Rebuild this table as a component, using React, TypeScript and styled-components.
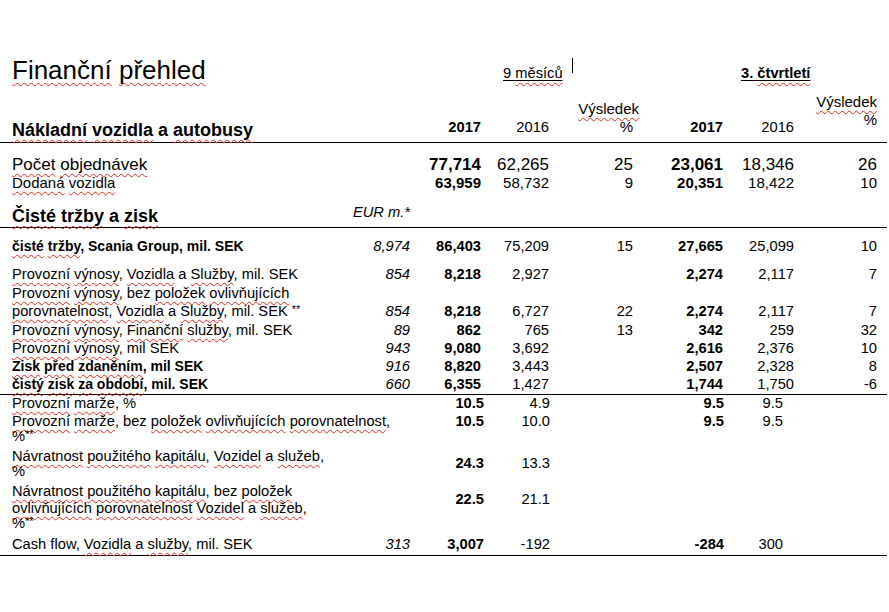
import React from 'react';
import styled, { createGlobalStyle, css } from 'styled-components';

const Global = createGlobalStyle`
  html, body { margin: 0; padding: 0; background: #ffffff; }
  body {
    font-family: "Liberation Sans", Arial, sans-serif;
    color: #000000;
    -webkit-font-smoothing: antialiased;
  }
`;

type Cols = 'upper' | 'lower';
const TEMPLATES: Record<Cols, string> = {
  upper: '338px 60px 71px 68px 84px 90px 71px 83px',
  lower: '338px 60px 74px 66px 84px 90px 59px 94px',
};

const Page = styled.div`
  width: 889px;
  height: 612px;
  padding-top: 55px;
  box-sizing: border-box;
  overflow: hidden;
`;

const Table = styled.div`
  width: 887px;
`;

const Section = styled.section<{ $pt?: number; $pb?: number }>`
  border-bottom: 1px solid #000;
  padding: ${({ $pt = 0 }) => $pt}px 0 ${({ $pb = 0 }) => $pb}px;
`;

const Row = styled.div<{
  $cols?: Cols;
  $pt?: number;
  $lh?: number;
  $size?: number;
  $h?: number;
  $align?: 'start' | 'end';
}>`
  display: grid;
  grid-template-columns: ${({ $cols = 'upper' }) => TEMPLATES[$cols]};
  padding: ${({ $pt = 0 }) => $pt}px 10px 0 12px;
  line-height: ${({ $lh = 18 }) => $lh}px;
  font-size: ${({ $size = 14.7 }) => $size}px;
  align-items: ${({ $align = 'start' }) => $align};
  ${({ $h }) => $h !== undefined && css`height: ${$h}px;`}
`;

const Spell = styled.span`
  text-decoration: underline wavy #e3261c;
  text-decoration-thickness: 1px;
  text-underline-offset: 3px;
  text-decoration-skip-ink: none;
`;

const Title = styled.h1`
  grid-column: 1 / span 2;
  grid-row: 1;
  margin: 0;
  font-size: 26px;
  font-weight: 400;
  line-height: 30px;
  white-space: nowrap;
`;

const GroupLabel = styled.div<{ $start: number; $indent: number; $bold?: boolean }>`
  grid-column: ${({ $start }) => $start} / span 2;
  grid-row: 1;
  display: flex;
  align-items: flex-start;
  margin-top: 9px;
  padding-left: ${({ $indent }) => $indent}px;
  line-height: 18px;
  font-size: 14.7px;
  font-weight: ${({ $bold }) => ($bold ? 700 : 400)};
  white-space: nowrap;
`;

const Underlined = styled.span`
  text-decoration: underline solid #000;
  text-decoration-thickness: 1px;
  text-underline-offset: 2px;
  text-decoration-skip-ink: none;
  & > ${Spell} {
    text-underline-offset: 4px;
  }
`;

const Caret = styled.span`
  display: block;
  width: 1px;
  height: 15px;
  margin-left: 9px;
  margin-top: -6px;
  background: #000;
`;

const HeadLabel = styled.div`
  grid-column: 1 / span 2;
  grid-row: 1;
  font-size: 18px;
  font-weight: 700;
  line-height: 22px;
  padding-bottom: 1px;
  white-space: nowrap;
`;

const YearHead = styled.div<{ $col: number; $bold?: boolean }>`
  grid-column: ${({ $col }) => $col};
  grid-row: 1;
  text-align: right;
  font-weight: ${({ $bold }) => ($bold ? 700 : 400)};
  padding-bottom: 6px;
`;

const ResultHead = styled.div<{ $col: number; $pb: number; $overhang?: number }>`
  grid-column: ${({ $col }) => $col};
  grid-row: 1;
  text-align: right;
  font-size: 15px;
  padding-bottom: ${({ $pb }) => $pb}px;
  white-space: nowrap;
  & > span:first-child {
    display: block;
    margin-right: ${({ $overhang = 0 }) => -$overhang}px;
  }
`;

const Label = styled.div<{ $bold?: boolean; $size?: number }>`
  grid-column: 1 / span 2;
  grid-row: 1;
  white-space: nowrap;
  font-weight: ${({ $bold }) => ($bold ? 700 : 400)};
  ${({ $size }) => $size !== undefined && css`font-size: ${$size}px;`}
`;

const LabelLine = styled.div<{ $lh?: number }>`
  ${({ $lh }) => $lh !== undefined && css`line-height: ${$lh}px;`}
`;

const Stars = styled.span`
  font-size: 11px;
  line-height: 0;
  vertical-align: 3px;
`;

const Heading = styled.div`
  grid-column: 1;
  grid-row: 1;
  font-size: 18px;
  font-weight: 700;
  line-height: 22px;
  white-space: nowrap;
`;

const Unit = styled.div`
  grid-column: 2;
  grid-row: 1;
  text-align: right;
  font-style: italic;
  line-height: 14px;
  white-space: nowrap;
`;

const Num = styled.div<{ $col: number; $bold?: boolean; $italic?: boolean; $pt?: number }>`
  grid-column: ${({ $col }) => $col};
  grid-row: 1;
  text-align: right;
  white-space: nowrap;
  font-weight: ${({ $bold }) => ($bold ? 700 : 400)};
  font-style: ${({ $italic }) => ($italic ? 'italic' : 'normal')};
  padding-top: ${({ $pt = 0 }) => $pt}px;
`;

type Vals = [string, string, string, string, string, string, string];

const Values: React.FC<{ v: Vals; pt?: number }> = ({ v, pt }) => (
  <>
    {v.map((text, i) =>
      text ? (
        <Num
          key={i}
          $col={i + 2}
          $bold={i === 1 || i === 4}
          $italic={i === 0}
          $pt={pt}
        >
          {text}
        </Num>
      ) : null
    )}
  </>
);

export default function App() {
  return (
    <>
      <Global />
      <Page>
        <Table>
          <Section>
            <Row $h={30} $lh={30}>
              <Title>
                <Spell>Finanční</Spell> <Spell>přehled</Spell>
              </Title>
              <GroupLabel $start={4} $indent={22}>
                <Underlined>
                  9 <Spell>měsíců</Spell>
                </Underlined>
                <Caret />
              </GroupLabel>
              <GroupLabel $start={7} $indent={18} $bold>
                <Underlined>
                  3. <Spell>čtvrtletí</Spell>
                </Underlined>
              </GroupLabel>
            </Row>
            <Row $h={57} $align="end">
              <HeadLabel>
                <Spell>Nákladní</Spell> <Spell>vozidla</Spell> a <Spell>autobusy</Spell>
              </HeadLabel>
              <YearHead $col={3} $bold>2017</YearHead>
              <YearHead $col={4}>2016</YearHead>
              <ResultHead $col={5} $pb={6} $overhang={6}>
                <span>
                  <Spell>Výsledek</Spell>
                </span>
                <span>%</span>
              </ResultHead>
              <YearHead $col={6} $bold>2017</YearHead>
              <YearHead $col={7}>2016</YearHead>
              <ResultHead $col={8} $pb={13}>
                <span>
                  <Spell>Výsledek</Spell>
                </span>
                <span>%</span>
              </ResultHead>
            </Row>
          </Section>

          <Section $pt={12}>
            <Row $lh={20} $size={17}>
              <Label>
                <Spell>Počet</Spell> <Spell>objednávek</Spell>
              </Label>
              <Values v={['', '77,714', '62,265', '25', '23,061', '18,346', '26']} />
            </Row>
            <Row $lh={16} $size={15}>
              <Label>
                <Spell>Dodaná</Spell> <Spell>vozidla</Spell>
              </Label>
              <Values v={['', '63,959', '58,732', '9', '20,351', '18,422', '10']} />
            </Row>
            <Row $pt={14} $lh={22}>
              <Heading>
                <Spell>Čisté</Spell> <Spell>tržby</Spell> a <Spell>zisk</Spell>
              </Heading>
              <Unit>EUR m.*</Unit>
            </Row>
          </Section>

          <Section $pt={9} $pb={1}>
            <Row>
              <Label $bold $size={14}>
                <Spell>čisté</Spell> <Spell>tržby</Spell>, Scania Group, mil. SEK
              </Label>
              <Values v={['8,974', '86,403', '75,209', '15', '27,665', '25,099', '10']} />
            </Row>
            <Row $pt={10}>
              <Label>
                <Spell>Provozní</Spell> <Spell>výnosy</Spell>, <Spell>Vozidla</Spell> a{' '}
                <Spell>Služby</Spell>, mil. SEK
              </Label>
              <Values v={['854', '8,218', '2,927', '', '2,274', '2,117', '7']} />
            </Row>
            <Row $pt={1}>
              <Label>
                <LabelLine>
                  <Spell>Provozní</Spell> <Spell>výnosy</Spell>, bez <Spell>položek</Spell>{' '}
                  <Spell>ovlivňujících</Spell>
                </LabelLine>
                <LabelLine>
                  <Spell>porovnatelnost</Spell>, <Spell>Vozidla</Spell> a <Spell>Služby</Spell>,
                  mil. SEK <Stars>**</Stars>
                </LabelLine>
              </Label>
              <Values v={['854', '8,218', '6,727', '22', '2,274', '2,117', '7']} pt={18} />
            </Row>
            <Row $pt={1}>
              <Label>
                <Spell>Provozní</Spell> <Spell>výnosy</Spell>, <Spell>Finanční</Spell>{' '}
                <Spell>služby</Spell>, mil. SEK
              </Label>
              <Values v={['89', '862', '765', '13', '342', '259', '32']} />
            </Row>
            <Row>
              <Label>
                <Spell>Provozní</Spell> <Spell>výnosy</Spell>, mil SEK
              </Label>
              <Values v={['943', '9,080', '3,692', '', '2,616', '2,376', '10']} />
            </Row>
            <Row>
              <Label $bold $size={14}>
                <Spell>Zisk</Spell> <Spell>před</Spell> <Spell>zdaněním</Spell>, mil SEK
              </Label>
              <Values v={['916', '8,820', '3,443', '', '2,507', '2,328', '8']} />
            </Row>
            <Row>
              <Label $bold $size={14}>
                <Spell>čistý</Spell> <Spell>zisk</Spell> <Spell>za</Spell>{' '}
                <Spell>období</Spell>, mil. SEK
              </Label>
              <Values v={['660', '6,355', '1,427', '', '1,744', '1,750', '-6']} />
            </Row>
          </Section>

          <Section $pb={2}>
            <Row $cols="lower" $lh={16}>
              <Label>
                <Spell>Provozní</Spell> <Spell>marže</Spell>, %
              </Label>
              <Values v={['', '10.5', '4.9', '', '9.5', '9.5', '']} />
            </Row>
            <Row $cols="lower" $pt={1}>
              <Label>
                <LabelLine>
                  <Spell>Provozní</Spell> <Spell>marže</Spell>, bez <Spell>položek</Spell>{' '}
                  <Spell>ovlivňujících</Spell> <Spell>porovnatelnost</Spell>,
                </LabelLine>
                <LabelLine $lh={12}>
                  %<Stars>**</Stars>
                </LabelLine>
              </Label>
              <Values v={['', '10.5', '10.0', '', '9.5', '9.5', '']} />
            </Row>
            <Row $cols="lower" $pt={5}>
              <Label>
                <LabelLine>
                  <Spell>Návratnost</Spell> <Spell>použitého</Spell> <Spell>kapitálu</Spell>,{' '}
                  <Spell>Vozidel</Spell> a <Spell>služeb</Spell>,
                </LabelLine>
                <LabelLine $lh={12}>%</LabelLine>
              </Label>
              <Values v={['', '24.3', '13.3', '', '', '', '']} pt={7} />
            </Row>
            <Row $cols="lower" $pt={6} $lh={17}>
              <Label>
                <LabelLine>
                  <Spell>Návratnost</Spell> <Spell>použitého</Spell> <Spell>kapitálu</Spell>, bez{' '}
                  <Spell>položek</Spell>
                </LabelLine>
                <LabelLine>
                  <Spell>ovlivňujících</Spell> <Spell>porovnatelnost</Spell> <Spell>Vozidel</Spell> a{' '}
                  <Spell>služeb</Spell>,
                </LabelLine>
                <LabelLine $lh={12}>
                  %<Stars>**</Stars>
                </LabelLine>
              </Label>
              <Values v={['', '22.5', '21.1', '', '', '', '']} pt={8} />
            </Row>
            <Row $cols="lower" $pt={6}>
              <Label>
                Cash flow, <Spell>Vozidla</Spell> a <Spell>služby</Spell>, mil. SEK
              </Label>
              <Values v={['313', '3,007', '-192', '', '-284', '300', '']} />
            </Row>
          </Section>
        </Table>
      </Page>
    </>
  );
}
